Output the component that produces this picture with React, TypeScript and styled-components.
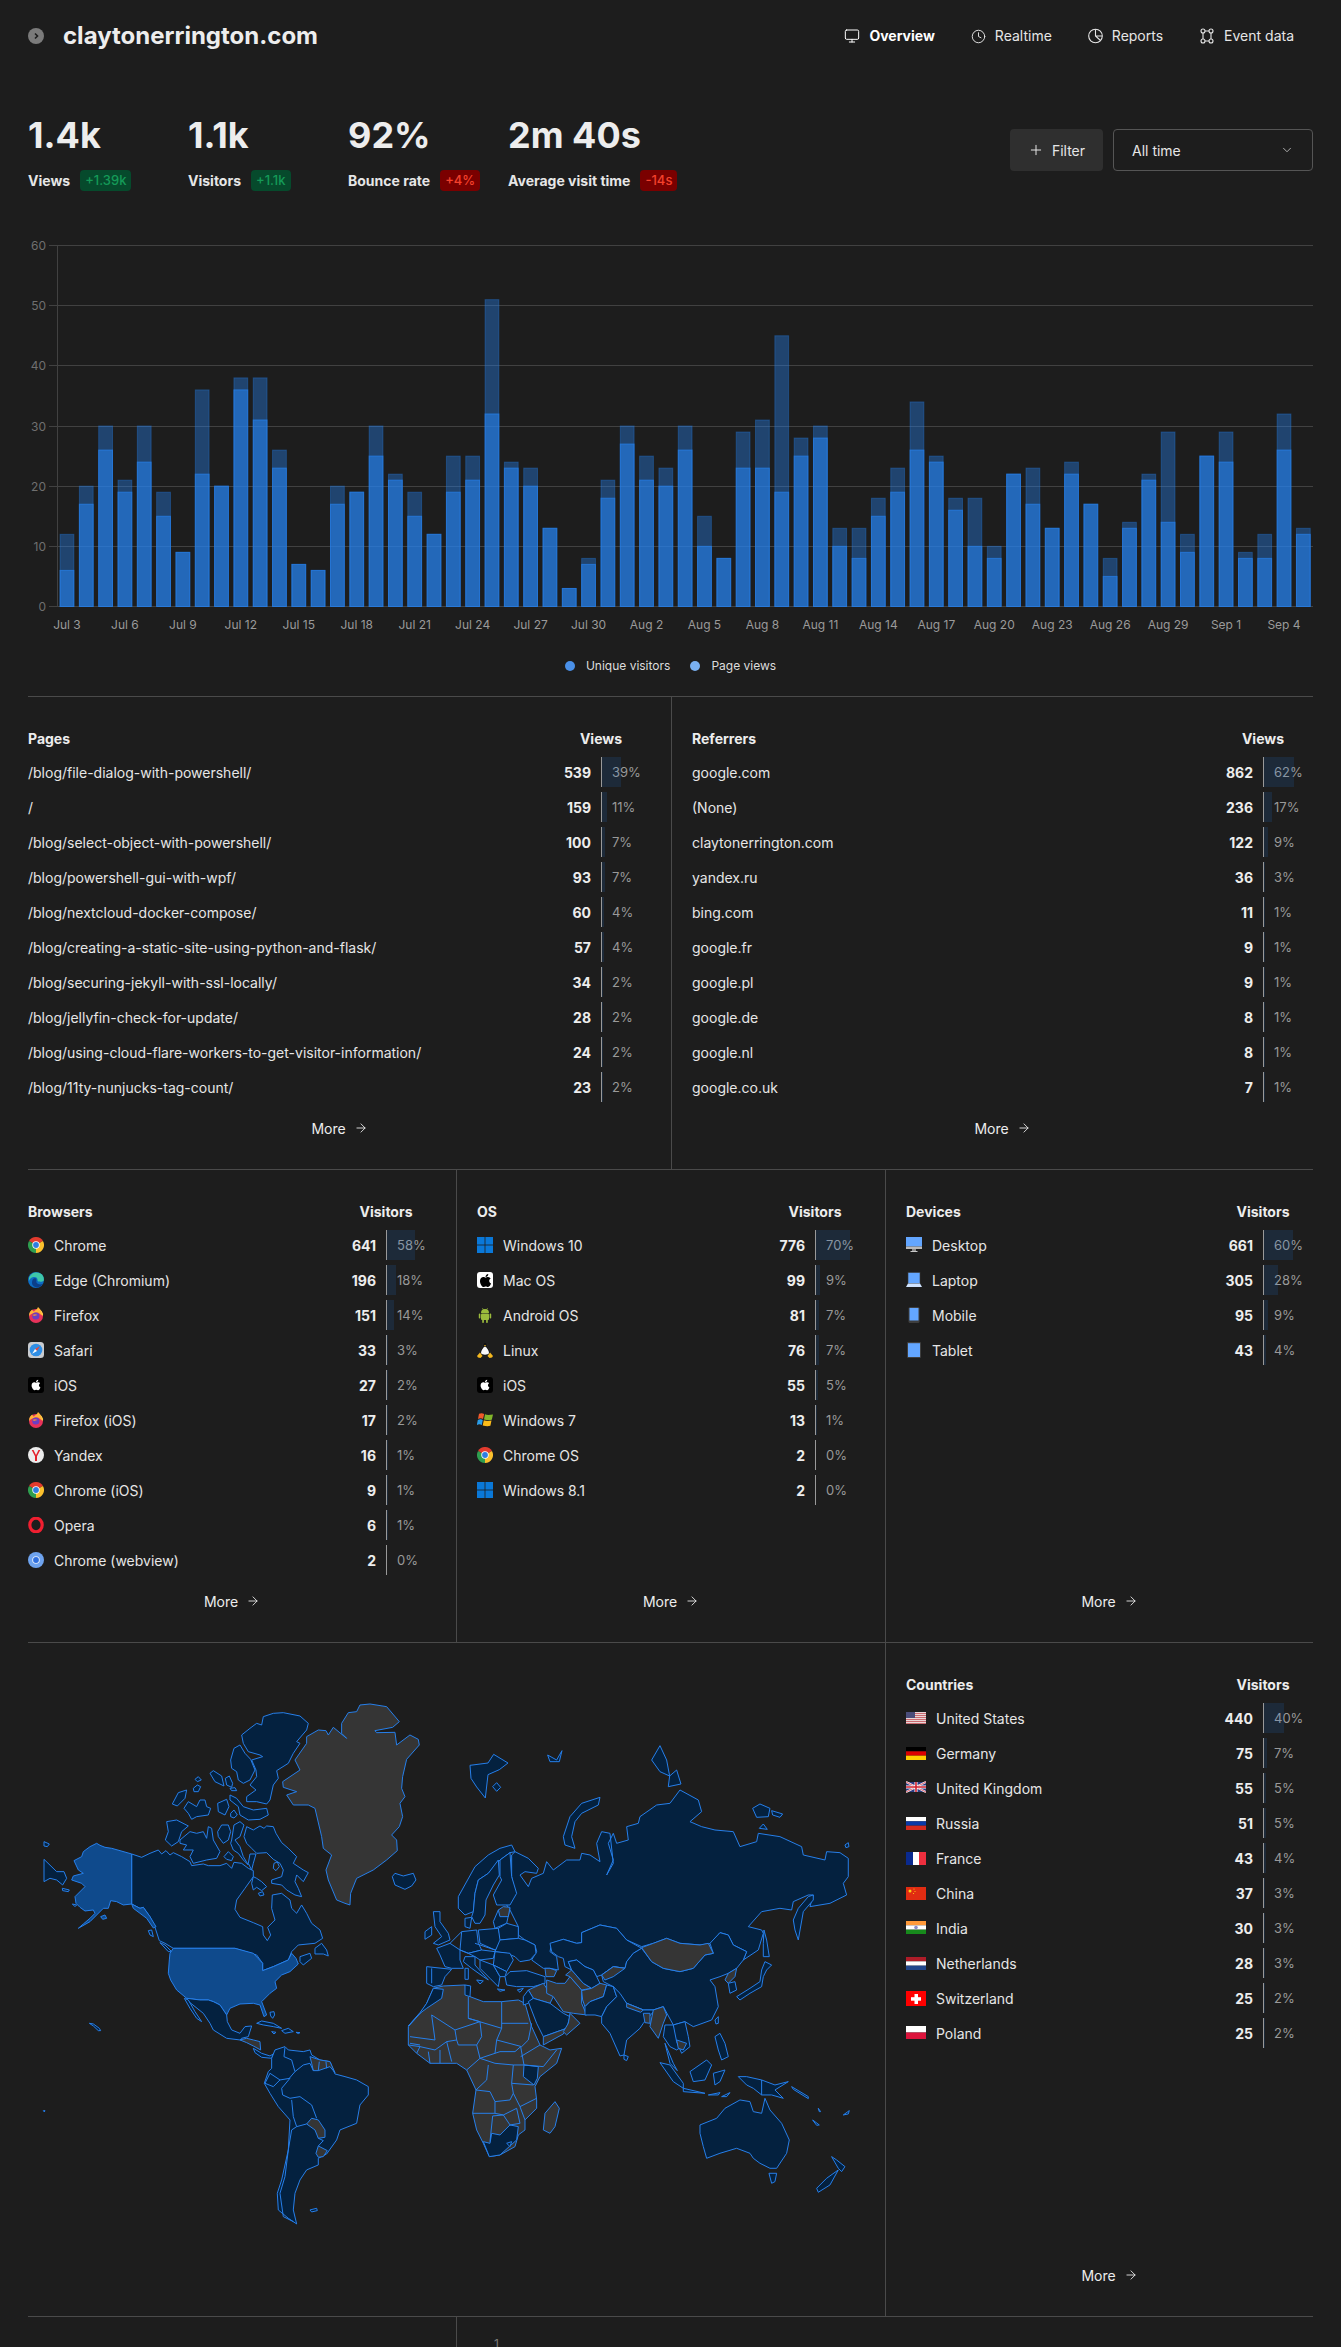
import React from 'react';
import styled, { createGlobalStyle } from 'styled-components';
import { Monitor, Clock, Plus, ChevronDown, ArrowRight } from 'lucide-react';
import { FaApple } from 'react-icons/fa';

const Global = createGlobalStyle`
  html, body { margin: 0; padding: 0; background: #1d1d1d; }
  body { font-family: Inter, "Noto Sans", "Liberation Sans", sans-serif; color: #e6e6e6; }
  * { box-sizing: border-box; }
`;

const Page = styled.div`
  width: 1341px;
  height: 2347px;
  overflow: hidden;
  padding: 0 28px;
  background: #1d1d1d;
`;

const Header = styled.header`
  height: 72px;
  display: flex;
  align-items: center;
  justify-content: space-between;
  padding-right: 19px;
`;
const Brand = styled.div`
  display: flex;
  align-items: center;
  gap: 19px;
`;
const BrandDot = styled.span`
  width: 16px;
  height: 16px;
  border-radius: 50%;
  background: #7b7b7b;
  display: flex;
  align-items: center;
  justify-content: center;
`;
const Title = styled.h1`
  margin: 0;
  font-size: 24px;
  line-height: 30px;
  font-weight: 700;
  color: #ededed;
`;
const Nav = styled.nav`
  display: flex;
  align-items: center;
  gap: 36px;
`;
const NavItem = styled.a<{ $active?: boolean }>`
  display: flex;
  align-items: center;
  gap: 9px;
  font-size: 14px;
  line-height: 20px;
  font-weight: ${p => (p.$active ? 700 : 400)};
  color: ${p => (p.$active ? '#ffffff' : '#e6e6e6')};
`;

const Summary = styled.section`
  height: 165px;
  padding-top: 40px;
  display: flex;
  justify-content: space-between;
  align-items: flex-start;
`;
const Metrics = styled.div`
  display: flex;
  gap: 20px;
`;
const Metric = styled.div`
  min-width: 140px;
`;
const MetricValue = styled.div`
  font-size: 36px;
  line-height: 46px;
  font-weight: 700;
  color: #ededed;
  margin-bottom: 12px;
`;
const MetricLabelRow = styled.div`
  display: flex;
  align-items: center;
  gap: 10px;
  height: 21px;
`;
const MetricLabel = styled.span`
  font-size: 14px;
  font-weight: 700;
  color: #e6e6e6;
  white-space: nowrap;
`;
const Badge = styled.span<{ $bad?: boolean }>`
  height: 21px;
  line-height: 21px;
  padding: 0 5px;
  border-radius: 4px;
  font-size: 13px;
  font-weight: 500;
  white-space: nowrap;
  background: ${p => (p.$bad ? '#7a0000' : '#064a2c')};
  color: ${p => (p.$bad ? '#f4412c' : '#159a58')};
`;
const Controls = styled.div`
  display: flex;
  gap: 10px;
  margin-top: 17px;
`;
const FilterButton = styled.button`
  width: 93px;
  height: 42px;
  border: 0;
  border-radius: 4px;
  background: #2f2f2f;
  color: #e6e6e6;
  font: 400 14px Inter, sans-serif;
  display: flex;
  align-items: center;
  justify-content: center;
  gap: 8px;
`;
const Select = styled.div`
  width: 200px;
  height: 42px;
  border: 1px solid #555;
  border-radius: 4px;
  display: flex;
  align-items: center;
  justify-content: space-between;
  padding: 0 18px;
  font-size: 14px;
  color: #e6e6e6;
`;

const ChartSvg = styled.svg`
  display: block;
  width: 1285px;
  height: 403px;
`;
const AxisText = styled.text`
  font-family: Inter, sans-serif;
  font-size: 12px;
  fill: #6f6f6f;
`;
const TickText = styled(AxisText)`
  fill: #9a9a9a;
`;
const Legend = styled.div`
  height: 57px;
  padding-bottom: 5px;
  display: flex;
  align-items: center;
  justify-content: center;
  gap: 20px;
  border-bottom: 1px solid #4a4a4a;
`;
const LegendItem = styled.div`
  display: flex;
  align-items: center;
  gap: 11px;
  font-size: 12px;
  color: #dcdcdc;
`;
const LegendDot = styled.span<{ $color: string }>`
  width: 10px;
  height: 10px;
  border-radius: 50%;
  background: ${p => p.$color};
`;

const Row = styled.div<{ $cols: string; $h: number }>`
  display: grid;
  grid-template-columns: ${p => p.$cols};
  height: ${p => p.$h}px;
  border-bottom: 1px solid #4a4a4a;
`;
const Panel = styled.div<{ $first?: boolean; $last?: boolean }>`
  display: flex;
  flex-direction: column;
  padding: 30px ${p => (p.$last ? 0 : 20)}px 30px ${p => (p.$first ? 0 : 20)}px;
  border-left: ${p => (p.$first ? '0' : '1px solid #4a4a4a')};
`;
const PanelHead = styled.div`
  height: 22px;
  margin-bottom: 8px;
  display: flex;
  align-items: center;
  justify-content: space-between;
  font-size: 14px;
  font-weight: 700;
  color: #ededed;
`;
const HeadMetric = styled.span`
  width: 100px;
  text-align: center;
`;
const TableRow = styled.div`
  height: 30px;
  margin-bottom: 5px;
  display: flex;
  align-items: center;
  font-size: 14px;
`;
const RowLabel = styled.div`
  flex: 1;
  display: flex;
  align-items: center;
  gap: 10px;
  color: #e6e6e6;
  white-space: nowrap;
`;
const RowValue = styled.div`
  font-weight: 700;
  color: #ededed;
  margin-right: 10px;
`;
const RowPct = styled.div`
  position: relative;
  width: 50px;
  height: 30px;
  line-height: 30px;
  padding-left: 10px;
  border-left: 1px solid #999;
  font-size: 13px;
  color: #999;
`;
const PctBar = styled.span`
  position: absolute;
  left: 0;
  top: 0;
  height: 30px;
  background: rgba(38, 128, 235, 0.14);
`;
const MoreLink = styled.a`
  margin-top: auto;
  height: 22px;
  display: flex;
  align-items: center;
  justify-content: center;
  gap: 8px;
  font-size: 14px;
  color: #ededed;
`;
const MapCell = styled.div`
  overflow: hidden;
`;
const MapSvg = styled.svg`
  display: block;
  width: 857px;
  height: 673px;
`;
const FooterRow = styled.div`
  display: grid;
  grid-template-columns: 428px 1fr;
  height: 300px;
`;
const FooterCell = styled.div<{ $line?: boolean }>`
  border-left: ${p => (p.$line ? '1px solid #4a4a4a' : '0')};
  padding: 19px 0 0 37px;
  font-size: 12px;
  color: #7a7a7a;
`;
const IconBox = styled.svg`
  flex: none;
  display: block;
`;
const AppleTile = styled.span<{ $light?: boolean }>`
  flex: none;
  width: 16px;
  height: 16px;
  border-radius: 3px;
  display: flex;
  align-items: center;
  justify-content: center;
  background: ${p => (p.$light ? '#fff' : '#000')};
  color: ${p => (p.$light ? '#000' : '#fff')};
`;

/* ---------- icons ---------- */
const Sv: React.FC<{ w?: number; h?: number; vb?: string; children: React.ReactNode }> = ({ w = 16, h = 16, vb = '0 0 16 16', children }) => (
  <IconBox width={w} height={h} viewBox={vb}>{children}</IconBox>
);
const Chrome = () => (
  <Sv>
    <path d="M8 8L1.07 4A8 8 0 0 1 14.93 4Z" fill="#e33b2e" />
    <path d="M8 8L14.93 4A8 8 0 0 1 8 16Z" fill="#fbc02d" />
    <path d="M8 8L8 16A8 8 0 0 1 1.07 4Z" fill="#2e9e4f" />
    <circle cx="8" cy="8" r="3.7" fill="#fff" />
    <circle cx="8" cy="8" r="2.9" fill="#2f7de1" />
  </Sv>
);
const Edge = () => (
  <Sv>
    <circle cx="8" cy="8" r="8" fill="#0d6cc4" />
    <path d="M1 6C2.5 1 8-1 12.5 1.5 15.5 3 16.5 7 15.5 9 14 10 10 10 9.5 8.5 10 6 8 4.5 5.5 5 3 5.5 1.5 7 1 9Z" fill="#3ec6a8" />
    <path d="M4.5 8C5 6.5 7 5.8 8 6.8 9 8 8 9 8.5 10.5 9.5 12.5 12.5 13 14.5 12 12.5 15.5 8 16.5 5.5 14 3.5 12.5 3.8 9.5 4.5 8Z" fill="#0b3f8a" />
  </Sv>
);
const Firefox = () => (
  <Sv>
    <circle cx="8" cy="9" r="7" fill="#e8325a" />
    <path d="M1 9C1 5 3 3 4.5 2.5 4.5 4 5.5 4.5 6 4.5 7 3 9.5 2.5 10 0 12 2 14 4 15 7 15.5 10 13.5 8 12 7 9 4 4 6 1 9Z" fill="#ffb43a" />
    <path d="M12.5 3C14 4.5 15 6.5 15 9 14 8 13.5 6 12.5 3Z" fill="#ffd44d" />
    <circle cx="7.8" cy="9" r="3.6" fill="#6b3fc4" />
    <path d="M4.5 8C6 7 8 7 9.5 8 8.5 8.5 7 8.5 6 9 5.5 8.8 5 8.5 4.5 8Z" fill="#f58a3a" />
  </Sv>
);
const Safari = () => (
  <Sv>
    <rect x="0" y="0" width="16" height="16" rx="3.5" fill="#c9ccd0" />
    <circle cx="8" cy="8" r="6.3" fill="#2f8fe6" />
    <path d="M11.8 4.2L9 9 7 7Z" fill="#e8443a" />
    <path d="M4.2 11.8L7 7 9 9Z" fill="#fff" />
  </Sv>
);
const Yandex = () => (
  <Sv>
    <circle cx="8" cy="8" r="8" fill="#ececec" />
    <path d="M7 14V9.3L3.7 3H5.5L8 8 10.5 3H12.3L9 9.3V14Z" fill="#e3202a" />
  </Sv>
);
const Opera = () => (
  <Sv>
    <ellipse cx="8" cy="8" rx="6.2" ry="6.8" fill="none" stroke="#f01f30" strokeWidth="3.2" />
  </Sv>
);
const Webview = () => (
  <Sv>
    <circle cx="8" cy="8" r="8" fill="#6ea3ee" />
    <circle cx="8" cy="8" r="3.8" fill="#e8f0fc" />
    <circle cx="8" cy="8" r="2.9" fill="#2f6fde" />
  </Sv>
);
const Win10 = () => (
  <Sv>
    <rect width="7.6" height="7.6" fill="#0a78d8" />
    <rect x="8.4" width="7.6" height="7.6" fill="#0a78d8" />
    <rect y="8.4" width="7.6" height="7.6" fill="#0a78d8" />
    <rect x="8.4" y="8.4" width="7.6" height="7.6" fill="#0a78d8" />
  </Sv>
);
const Win7 = () => (
  <Sv>
    <path d="M2 1.8C4 .8 5.5 1 7.2 2L6 7C4.500 6 3 6 1 7Z" fill="#f05a2a" />
    <path d="M8 2.300C10 3.200 12 3.200 16 2.500L14.800 7.800C12 8.500 10 8.200 7 7.400Z" fill="#82b62a" />
    <path d="M.8 8C2.500 7 4.500 7 5.800 8L4.800 13C3 12 1.500 12-.2 13Z" fill="#2a9de8" />
    <path d="M6.800 8.300C9 9 11.500 9.300 14.500 8.600L13.400 13.800C11 14.500 8.500 14.200 5.700 13.400Z" fill="#fbbc1a" />
  </Sv>
);
const Android = () => (
  <Sv>
    <g fill="#9bbb3c">
      <path d="M4 6A4 4 0 0 1 12 6Z" />
      <rect x="4" y="6.600" width="8" height="6.400" rx="1" />
      <rect x="1.800" y="6.600" width="1.600" height="5" rx=".8" />
      <rect x="12.600" y="6.600" width="1.600" height="5" rx=".8" />
      <rect x="5.200" y="12" width="1.700" height="4" rx=".8" />
      <rect x="9.100" y="12" width="1.700" height="4" rx=".8" />
      <path d="M5.300 1L6.600 3M10.700 1L9.400 3" stroke="#9bbb3c" strokeWidth=".6" />
    </g>
  </Sv>
);
const Linux = () => (
  <Sv>
    <path d="M8 0C6.300 0 5.800 2 6 3.500 5 6 2.800 8 2.800 11 3 13 5 14 8 14 11 14 13 13 13.200 11 13.200 8 11 6 10 3.500 10.200 2 9.700 0 8 0Z" fill="#111" stroke="#444" strokeWidth=".3" />
    <path d="M8 4.500C6.200 5.500 4 8.500 4 11 4.500 13.200 11.500 13.200 12 11 12 8.500 9.800 5.500 8 4.500Z" fill="#fafafa" />
    <path d="M0 14L3 10.500 5.500 14 3.500 16 1 15.500Z" fill="#f4b81f" />
    <path d="M16 14L13 10.500 10.500 14 12.500 16 15 15.500Z" fill="#f4b81f" />
    <path d="M6.800 3.200H9.200L8 4.600Z" fill="#f4b81f" />
  </Sv>
);
const Desktop = () => (
  <Sv>
    <rect y="0" width="16" height="9.500" fill="#63a6ff" />
    <rect y="9.500" width="16" height="2.500" fill="#b9b9b9" />
    <rect x="6" y="12" width="4" height="2" fill="#8c8c8c" />
    <rect x="4.500" y="14" width="7" height="1" fill="#c9c9c9" />
  </Sv>
);
const Laptop = () => (
  <Sv>
    <rect x="2" y="0.500" width="12" height="11" fill="#63a6ff" stroke="#3b3b3b" strokeWidth=".6" />
    <path d="M2 11.500H14L16 15H0Z" fill="#cfe3ff" />
  </Sv>
);
const Mobile = () => (
  <Sv>
    <rect x="2.500" y="0" width="11" height="16" rx="1.500" fill="#3e3e3e" />
    <rect x="3.500" y="1" width="9" height="12.500" fill="#63a6ff" />
  </Sv>
);
const Tablet = () => (
  <Sv>
    <rect x="1" y="0" width="14" height="16" rx="1" fill="#3e3e3e" />
    <rect x="2" y="1.200" width="12" height="13.800" fill="#63a6ff" />
  </Sv>
);
const Apple = ({ light }: { light?: boolean }) => <AppleTile $light={light}><FaApple size={light ? 15 : 12} /></AppleTile>;
const EventIcon = () => (
  <Sv w={16} h={16} vb="-1 0 16 16">
    <g fill="none" stroke="#e6e6e6" strokeWidth="1.100">
      <circle cx="3" cy="3" r="2" /><circle cx="11" cy="3" r="2" /><circle cx="3" cy="13" r="2" /><circle cx="11" cy="13" r="2" />
      <path d="M5 3H9M3 5V11M11 5V11M5 13H9" />
    </g>
  </Sv>
);
const ReportIcon = () => (
  <Sv w={15} h={16} vb="0 0 15 16">
    <g fill="none" stroke="#e6e6e6" strokeWidth="1.100">
      <circle cx="7.500" cy="8" r="6.800" />
      <path d="M7.500 1.200V8L12.500 12.500M7.500 8H14" />
    </g>
  </Sv>
);

/* flags */
const Flag: React.FC<{ children: React.ReactNode }> = ({ children }) => <Sv w={20} h={15} vb="0 0 20 15">{children}</Sv>;
const H3 = ({ a, b, c, y = 0, h = 13 }: { a: string; b: string; c: string; y?: number; h?: number }) => (
  <Flag>
    <rect y={y} width="20" height={h / 3} fill={a} />
    <rect y={y + h / 3} width="20" height={h / 3} fill={b} />
    <rect y={y + (2 * h) / 3} width="20" height={h / 3} fill={c} />
  </Flag>
);
const FlagUS = () => (
  <Flag>
    <rect y="1" width="20" height="11" fill="#e9d7d8" />
    {[1, 3, 5, 7, 9, 11].map(y => <rect key={y} y={y + 1} width="20" height="1" fill="#c96a70" />)}
    <rect y="1" width="9" height="6" fill="#4a4d7a" />
  </Flag>
);
const FlagUK = () => (
  <Flag>
    <rect y="1" width="20" height="10" fill="#2a3a80" />
    <path d="M0 1L20 11M20 1L0 11" stroke="#fff" strokeWidth="2" />
    <path d="M0 1L20 11M20 1L0 11" stroke="#d0202e" strokeWidth=".7" />
    <path d="M10 1V11M0 6H20" stroke="#fff" strokeWidth="3" />
    <path d="M10 1V11M0 6H20" stroke="#d0202e" strokeWidth="1.600" />
  </Flag>
);
const FlagFR = () => (
  <Flag>
    <rect y="1" width="7" height="13" fill="#0a2a8f" />
    <rect x="7" y="1" width="6" height="13" fill="#fff" />
    <rect x="13" y="1" width="7" height="13" fill="#ee2f3e" />
  </Flag>
);
const FlagCN = () => (
  <Flag>
    <rect y="1" width="20" height="13" fill="#e12c12" />
    <circle cx="4" cy="5" r="1.500" fill="#fcd116" />
    <circle cx="8" cy="3" r=".6" fill="#fcd116" />
    <circle cx="9" cy="5.500" r=".6" fill="#fcd116" />
    <circle cx="7.500" cy="7.500" r=".6" fill="#fcd116" />
  </Flag>
);
const FlagIN = () => (
  <Flag>
    <rect y="0" width="20" height="4.300" fill="#ff9a3a" />
    <rect y="4.300" width="20" height="4.400" fill="#fff" />
    <rect y="8.700" width="20" height="4.300" fill="#178a1c" />
    <circle cx="10" cy="6.500" r="1.800" fill="#8a8ac8" />
  </Flag>
);
const FlagCH = () => (
  <Flag>
    <rect y="0" width="20" height="15" fill="#f00" />
    <rect x="8.500" y="3" width="3.500" height="10" fill="#fff" />
    <rect x="5" y="6.200" width="10" height="3.500" fill="#fff" />
  </Flag>
);
const FlagPL = () => (
  <Flag>
    <rect y="0" width="20" height="6.500" fill="#fff" />
    <rect y="6.500" width="20" height="6.500" fill="#dc143c" />
  </Flag>
);

/* ---------- data ---------- */
type R = [string, string, number, React.ReactNode?];
const pages: R[] = [
  ['/blog/file-dialog-with-powershell/', '539', 39], ['/', '159', 11],
  ['/blog/select-object-with-powershell/', '100', 7], ['/blog/powershell-gui-with-wpf/', '93', 7],
  ['/blog/nextcloud-docker-compose/', '60', 4], ['/blog/creating-a-static-site-using-python-and-flask/', '57', 4],
  ['/blog/securing-jekyll-with-ssl-locally/', '34', 2], ['/blog/jellyfin-check-for-update/', '28', 2],
  ['/blog/using-cloud-flare-workers-to-get-visitor-information/', '24', 2], ['/blog/11ty-nunjucks-tag-count/', '23', 2],
];
const refs: R[] = [
  ['google.com', '862', 62], ['(None)', '236', 17], ['claytonerrington.com', '122', 9], ['yandex.ru', '36', 3],
  ['bing.com', '11', 1], ['google.fr', '9', 1], ['google.pl', '9', 1], ['google.de', '8', 1], ['google.nl', '8', 1], ['google.co.uk', '7', 1],
];
const browsers: R[] = [
  ['Chrome', '641', 58, <Chrome />], ['Edge (Chromium)', '196', 18, <Edge />], ['Firefox', '151', 14, <Firefox />],
  ['Safari', '33', 3, <Safari />], ['iOS', '27', 2, <Apple />], ['Firefox (iOS)', '17', 2, <Firefox />],
  ['Yandex', '16', 1, <Yandex />], ['Chrome (iOS)', '9', 1, <Chrome />], ['Opera', '6', 1, <Opera />], ['Chrome (webview)', '2', 0, <Webview />],
];
const oses: R[] = [
  ['Windows 10', '776', 70, <Win10 />], ['Mac OS', '99', 9, <Apple light />], ['Android OS', '81', 7, <Android />],
  ['Linux', '76', 7, <Linux />], ['iOS', '55', 5, <Apple />], ['Windows 7', '13', 1, <Win7 />],
  ['Chrome OS', '2', 0, <Chrome />], ['Windows 8.1', '2', 0, <Win10 />],
];
const devices: R[] = [
  ['Desktop', '661', 60, <Desktop />], ['Laptop', '305', 28, <Laptop />], ['Mobile', '95', 9, <Mobile />], ['Tablet', '43', 4, <Tablet />],
];
const countries: R[] = [
  ['United States', '440', 40, <FlagUS />], ['Germany', '75', 7, <H3 a="#000" b="#dd0000" c="#ffce00" y={1} />],
  ['United Kingdom', '55', 5, <FlagUK />], ['Russia', '51', 5, <H3 a="#fff" b="#0a3aa8" c="#d52b1e" y={1} />],
  ['France', '43', 4, <FlagFR />], ['China', '37', 3, <FlagCN />], ['India', '30', 3, <FlagIN />],
  ['Netherlands', '28', 3, <H3 a="#ae1c28" b="#fff" c="#21468b" y={1} />], ['Switzerland', '25', 2, <FlagCH />], ['Poland', '25', 2, <FlagPL />],
];

const views = [12,20,30,21,30,19,9,36,20,38,38,26,7,6,20,19,30,22,19,12,25,25,51,24,23,13,3,8,21,30,25,23,30,15,8,29,31,45,28,30,13,13,18,23,34,25,18,18,10,22,23,13,24,17,8,14,22,29,12,25,29,9,12,32,13];
const uniq = [6,17,26,19,24,15,9,22,20,36,31,23,7,6,17,19,25,21,15,12,19,21,32,23,20,13,3,7,18,27,21,20,26,10,8,23,23,19,25,28,10,8,15,19,26,24,16,10,8,22,17,13,22,17,5,13,21,14,9,25,24,8,8,26,12];

const Y0 = 369.5;
const UNIT = 361 / 60;
const BW = 13.8;
const STEP = 1255.7 / 65;
const cx = (i: number) => 29.3 + STEP * (i + 0.5);
const MONTH = ['Jul', 'Aug', 'Sep'];
const dateLabel = (i: number) => {
  if (i <= 28) return `${MONTH[0]} ${i + 3}`;
  if (i <= 59) return `${MONTH[1]} ${i - 28}`;
  return `${MONTH[2]} ${i - 59}`;
};

const Chart = () => (
  <ChartSvg viewBox="0 0 1285 403">
    {[0, 10, 20, 30, 40, 50, 60].map(v => {
      const y = Math.round(Y0 - v * UNIT - 0.5) + 0.5;
      return (
        <g key={v}>
          <line x1="21" x2="1285" y1={y} y2={y} stroke="#414141" />
          <AxisText x="18" y={y + 4} textAnchor="end">{v}</AxisText>
        </g>
      );
    })}
    <line x1="29.500" x2="29.500" y1="8" y2="370" stroke="#414141" />
    {views.map((v, i) => (
      <rect key={`v${i}`} x={cx(i) - BW / 2} y={Y0 - v * UNIT} width={BW} height={v * UNIT}
        fill="rgba(38,128,235,0.4)" stroke="rgba(38,128,235,0.35)" />
    ))}
    {uniq.map((v, i) => (
      <rect key={`u${i}`} x={cx(i) - BW / 2} y={Y0 - v * UNIT} width={BW} height={v * UNIT}
        fill="rgba(38,128,235,0.6)" stroke="rgba(38,128,235,0.7)" />
    ))}
    {views.map((_, i) => i % 3 === 0 && (
      <TickText key={i} x={cx(i)} y="392" textAnchor="middle">{dateLabel(i)}</TickText>
    ))}
  </ChartSvg>
);

/* ---------- map, traced from the picture ---------- */
const D = '#04213f', B = '#0f4a8c', G = '#353535';
type S = [string, string];
const west: S[] = [
  [G, '960,15 990,12 1040,20 1078,65 1058,82 1005,92 1010,98 1065,97 1070,135 1110,105 1135,118 1138,135 1100,178 1088,230 1085,265 1095,290 1080,310 1088,350 1078,380 1055,405 1070,420 1072,452 1040,480 1000,510 950,535 932,580 930,615 915,610 890,600 865,540 858,510 875,465 850,445 845,410 825,325 805,315 760,315 740,285 770,275 730,262 728,245 780,210 765,180 800,130 800,110 835,90 858,92 865,105 880,82 920,115 905,100 905,70 925,38 950,35'],
  [D, '1057,530 1065,520 1090,528 1120,520 1128,540 1115,558 1095,568 1065,555'],
  [D, '605,105 630,85 650,70 665,75 670,50 700,40 730,38 780,48 805,70 800,90 770,125 780,130 760,160 745,190 710,212 715,235 700,255 690,300 680,312 650,305 620,305 620,290 648,270 630,255 650,230 648,210 635,180 668,170 660,165 625,155 610,130'],
  [D, '572,180 582,145 600,135 615,160 632,178 645,210 630,240 610,250 595,240 590,215 575,205'],
  [D, '570,285 590,295 610,320 640,330 680,325 685,345 660,358 625,360 600,345 595,320 570,300'],
  [D, '533,310 560,298 567,320 555,345 535,335'],
  [D, '572,340 582,330 592,345 582,354 572,350'],
  [D, '432,325 445,305 470,320 480,300 495,300 500,320 512,325 505,345 470,350 455,358 445,340'],
  [D, '397,312 415,278 440,270 435,295 412,318'],
  [D, '460,265 472,255 482,260 475,275 462,275'],
  [D, '465,238 475,230 484,240 472,245'],
  [D, '510,220 520,212 545,228 552,258 525,245'],
  [D, '556,235 568,228 578,250 575,262 560,255'],
  [D, '570,265 585,263 590,272 575,272'],
  [D, '380,365 410,360 445,378 425,395 415,425 395,438 376,420 385,395'],
  [D, '420,420 450,395 470,400 490,395 500,415 505,380 515,385 520,420 540,455 530,475 500,480 460,490 450,470 460,450 430,450 440,435 420,430'],
  [D, '533,395 545,375 565,375 572,395 565,420 550,430 535,410'],
  [D, '575,420 582,375 600,365 612,375 600,410 585,420 600,440 610,470 625,495 610,480 595,460 580,450 572,430'],
  [D, '552,470 565,455 580,470 575,482 560,478'],
  [D, '630,462 648,462 640,490 635,510 625,490'],
  [D, '620,380 640,390 660,378 672,385 680,378 700,380 708,400 725,428 745,445 770,470 760,490 790,510 805,518 790,545 770,525 765,545 775,565 785,590 765,585 740,570 725,555 695,550 695,540 725,530 730,510 720,490 700,478 680,458 650,460 635,445 620,430 612,410'],
  ['#1d1d1d', '702,490 712,486 718,500 708,512 700,505'],
  [D, '275,462 305,472 330,460 355,450 365,462 378,452 390,465 400,458 425,470 450,485 455,497 490,492 505,497 540,497 560,490 575,505 582,487 605,490 625,505 640,512 640,530 615,565 590,600 585,628 600,652 640,668 668,680 670,705 682,722 692,705 683,682 705,660 695,625 697,585 725,580 750,600 755,625 770,640 785,615 800,640 815,670 840,690 848,715 825,730 775,735 755,755 745,780 700,800 668,812 668,790 650,765 585,745 400,745 375,730 358,722 345,682 330,650 310,622 300,625 275,612'],
  [D, '640,530 650,535 665,545 680,560 665,572 650,562 640,570 635,550'],
  [D, '655,580 668,575 672,585 660,588'],
  [D, '825,745 845,730 860,750 865,768 850,762 825,762'],
  [D, '780,770 810,760 815,775 790,795 780,785'],
  [D, '360,728 375,735 395,755 385,755'],
  [D, '325,692 335,690 340,710 330,705'],
  [B, '170,430 180,436 195,442 215,445 240,452 275,462 275,612 250,615 230,605 212,602 205,625 190,625 170,645 150,665 115,685 130,672 150,655 165,640 160,630 135,633 120,622 108,610 105,590 125,570 135,560 125,550 95,540 100,528 130,520 115,510 102,482 125,470 130,455 150,440'],
  [B, '275,612 300,625 310,622 330,650 348,680 340,684 320,655 300,640 280,625'],
  [B, '182,650 195,645 200,655 188,658'],
  [B, '400,745 585,745 640,760 668,790 668,812 700,800 745,780 755,760 768,775 775,792 750,815 725,825 705,845 710,865 690,880 665,905 680,945 672,950 660,915 640,910 600,912 570,925 560,945 540,915 520,905 505,900 480,900 440,895 410,870 392,840 385,820 388,780 390,760'],
  [D, '440,895 480,900 505,900 520,905 540,915 560,945 562,965 575,990 600,1000 615,980 635,978 625,1010 605,1015 600,1020 560,1015 520,990 510,970 490,940 465,920 440,900'],
  [D, '433,895 445,900 465,935 485,965 470,955 450,925'],
  [G, '600,1020 620,1015 640,1020 660,1025 662,1050 640,1038 620,1028'],
  [D, '640,1045 665,1060 690,1068 700,1062 695,1075 665,1072 645,1058'],
  [D, '650,970 665,963 700,970 725,985 700,980 670,975'],
  [D, '725,992 745,985 760,995 735,1000'],
  [D, '695,995 708,997 702,1002'],
  [D, '768,997 780,998 775,1001'],
  [D, '690,937 702,935 704,945 698,955 692,948'],
  [D, '148,970 160,972 178,985 182,992 175,992 160,978'],
  [D, '12,478 50,515 72,515 80,535 68,555 50,540 30,535 12,545'],
  [D, '12,425 28,432 22,440 12,438'],
  [D, '67,565 88,570 85,575 68,572'],
  [D, '97,612 110,615 105,620'],
  [D, '10,1232 15,1232 13,1236'],
  [D, '705,1050 735,1040 745,1050 790,1055 810,1050 815,1065 840,1080 870,1085 885,1122 915,1130 950,1140 985,1160 985,1185 960,1215 950,1270 900,1290 890,1320 860,1362 835,1375 835,1395 800,1410 780,1440 765,1480 760,1530 770,1572 745,1555 715,1530 712,1480 725,1440 745,1350 750,1260 715,1220 690,1180 673,1150 685,1115 695,1105 695,1075'],
  [G, '810,1070 840,1080 870,1085 885,1118 870,1100 835,1112 820,1112 815,1090'],
  [G, '800,1272 815,1255 835,1260 855,1290 855,1312 835,1315 825,1290'],
  [G, '828,1360 835,1338 862,1352 850,1370 835,1372'],
  [D, '810,1530 830,1525 832,1532 815,1536'],
];
const westLines = [
  '735,1042 732,1070 755,1080 765,1115 748,1135', '765,1115 790,1095 810,1090 820,1112',
  '675,1150 690,1120 720,1140 750,1135', '675,1150 700,1160 720,1140', '750,1135 725,1165 728,1185 750,1195 780,1190 815,1215 830,1255',
  '755,1200 760,1250 770,1280 800,1272', '755,1290 745,1350 735,1430 720,1480 730,1550 760,1565', '770,1280 755,1290',
  '835,1315 850,1322 835,1338', '835,1112 838,1085', '860,1105 858,1085',
];
const east: S[] = [
  [G, '25,740 65,695 80,670 100,625 130,618 195,615 210,650 250,665 305,665 355,660 375,670 395,740 420,795 450,810 485,805 470,850 420,890 405,920 410,960 410,985 375,1020 375,1050 355,1065 345,1100 300,1125 268,1130 250,1090 230,1050 218,1000 228,930 200,870 170,850 90,850 50,820 25,795'],
  [D, '25,738 60,698 80,670 100,625 130,628 125,655 80,685 60,700'],
  [D, '250,1085 270,1090 275,1060 300,1065 330,1035 355,1040 350,1080 300,1125 268,1130'],
  [D, '372,855 415,860 412,895 402,915 370,890'],
  [D, '195,615 212,618 210,650 195,645'],
  [G, '465,965 478,985 465,1040 450,1060 430,1050 435,1000'],
  [D, '490,170 510,110 545,70 600,52 595,75 545,100 525,125 515,170 525,205 495,195'],
  [D, '755,-60 780,-103 800,-60 809,-12 780,-25'],
  [D, '809,-12 830,-30 843,12 805,20'],
  [D, '210,-44 264,-51 281,-77 324,-51 298,-31 264,-16 256,54 230,21 213,-5'],
  [D, '278,20 290,8 302,22 290,34'],
  [D, '443,-75 470,-60 486,-88 478,-55 450,-55'],
  [D, '330,390 355,440 355,465 375,480 405,495 410,515 395,540 430,565 450,565 475,570 470,530 450,515 455,490 490,478 530,490 545,488 545,458 600,435 650,445 680,480 725,500 760,490 800,475 840,490 900,495 935,490 960,458 985,465 1000,495 1040,515 1030,540 1075,510 1090,460 1085,450 1045,440 1085,395 1140,385 1175,390 1180,365 1225,345 1240,345 1230,380 1290,370 1340,345 1330,310 1345,290 1345,235 1320,218 1280,215 1275,240 1210,225 1205,200 1140,170 1075,160 1070,185 1020,200 1000,155 945,150 905,140 870,125 905,95 895,60 840,30 810,70 770,75 720,110 715,130 680,140 685,180 650,190 640,160 625,190 640,240 620,285 640,250 630,160 605,155 590,190 600,245 570,225 545,220 540,240 500,240 460,270 440,245 430,280 395,295 385,320 360,285 375,275 410,280 415,265 385,235 345,215 335,225 335,290 345,340 320,375'],
  [D, '450,490 490,478 530,490 545,488 545,458 600,435 650,445 680,480 725,505 700,520 680,545 675,565 640,560 605,585 590,590 580,570 555,560 530,540 505,545 515,570 495,560 490,535 475,530 455,515'],
  [D, '725,505 755,545 790,565 840,575 880,565 915,525 940,520 930,490 960,458 985,465 1000,495 1040,515 1030,540 1010,565 985,580 960,590 930,600 945,620 955,680 935,720 880,740 855,725 820,735 790,680 760,690 730,690 680,670 640,620 610,605 605,585 640,560 675,565 680,545 700,520'],
  [G, '725,503 760,490 800,475 840,490 900,495 925,490 940,520 915,525 880,565 840,575 790,565 755,545'],
  [G, '985,580 1010,565 1005,590 985,610 975,600'],
  [D, '985,610 1005,605 1010,630 990,640'],
  [D, '945,720 955,710 955,730 948,732'],
  [D, '1010,650 1050,625 1080,605 1085,570 1095,545 1115,555 1100,570 1090,590 1085,620 1050,640 1020,660'],
  [D, '1240,345 1240,360 1210,395 1195,480 1185,450 1180,420 1195,385 1225,350'],
  [D, '1092,450 1100,480 1108,530 1090,530 1090,490'],
  [D, '1335,195 1345,188 1347,200 1338,203'],
  [D, '1058,85 1080,72 1110,85 1105,110 1070,112'],
  [D, '1115,92 1148,102 1140,112 1118,105'],
  [D, '1078,145 1090,132 1102,148'],
  [D, '175,350 225,260 265,225 300,205 335,195 345,215 330,218 300,240 265,280 235,300 225,340 220,395 195,405 175,385'],
  [D, '220,395 225,340 235,300 265,280 295,240 298,285 280,315 258,360 255,405 240,430 225,430 215,410'],
  [D, '300,240 330,218 335,290 350,340 330,375 290,375 280,345 305,300 300,290'],
  [D, '195,415 215,412 210,445 195,440'],
  [D, '100,395 120,395 120,425 145,460 150,480 115,495 100,490 125,470 105,440'],
  [D, '75,455 95,440 95,465 75,478'],
  [D, '110,505 150,490 180,510 180,540 190,565 155,565 135,560 120,525'],
  [D, '80,560 155,568 135,590 125,615 100,620 80,610'],
  [D, '185,455 230,450 235,490 245,510 205,520 180,510'],
  [D, '235,450 295,445 305,490 285,510 240,490'],
  [D, '295,390 330,385 320,430 285,445 280,425'],
  [G, '295,390 310,380 330,382 325,410 300,410'],
  [D, '295,445 320,430 355,440 355,475 300,480'],
  [D, '300,480 355,475 375,480 405,495 408,520 390,540 360,545 345,530 320,520 285,515'],
  [D, '285,515 330,520 340,540 320,575 280,555'],
  [D, '205,520 245,510 285,515 280,535 240,540 225,530'],
  [D, '195,530 225,530 225,555 265,600 250,590 215,565 190,545'],
  [D, '240,540 280,555 300,590 295,620 270,595 240,565'],
  [D, '280,555 320,575 315,590 300,590'],
  [D, '195,565 205,565 205,598 195,598'],
  [D, '230,600 250,603 240,612'],
  [D, '292,627 315,630 300,634'],
  [D, '352,630 370,625 360,637'],
  [D, '315,590 330,575 380,572 435,590 435,610 400,620 350,620 320,615'],
  [G, '435,565 450,565 470,572 462,590 438,590'],
  [G, '385,630 430,610 450,640 460,650 450,670 400,655'],
  [D, '370,650 385,630 400,655 385,670 370,675'],
  [D, '385,665 400,655 450,670 490,700 510,710 500,745 430,770 410,730'],
  [G, '430,770 500,745 490,762 430,795'],
  [G, '510,700 540,730 500,765 490,755 505,730'],
  [G, '440,600 470,610 495,610 510,590 545,630 545,670 560,705 520,700 490,695 460,650 440,640'],
  [G, '497,585 515,570 550,610 575,625 545,630 510,590'],
  [D, '505,545 530,540 555,560 580,570 590,590 600,610 575,625 550,610 515,570'],
  [G, '545,632 575,625 600,610 620,615 610,650 570,665 555,680 548,660'],
  [G, '605,585 640,560 675,565 640,590 615,600'],
  [D, '555,680 570,665 610,650 620,615 640,620 650,650 620,680 605,710 585,705 555,705'],
  [D, '605,710 620,680 650,650 640,620 660,640 680,670 730,690 765,690 730,730 720,745 680,780 672,825 660,828 630,760 605,730'],
  [G, '680,670 730,690 722,697 680,682'],
  [G, '730,700 750,700 750,730 735,728'],
  [G, '760,690 790,680 800,705 790,730 775,775 750,740'],
  [D, '795,735 820,735 830,760 845,800 830,810 810,800 790,770'],
  [D, '820,735 855,725 865,770 870,800 845,820 830,785'],
  [G, '830,780 860,790 850,810 835,805'],
  [D, '795,790 820,850 832,872 810,850'],
  [D, '780,848 810,855 850,910 850,925 820,905'],
  [D, '850,925 915,940 850,935'],
  [D, '870,875 920,840 935,855 915,900 880,905'],
  [D, '940,880 975,870 960,905 945,915'],
  [D, '945,770 960,760 975,790 985,830 965,840 955,810'],
  [D, '925,945 960,938 955,945'], [D, '965,950 990,938 980,950'],
  [D, '1015,890 1040,890 1085,900 1125,915 1165,905 1125,930 1150,955 1115,945 1085,945 1060,925 1040,915'],
  [D, '1175,920 1225,950 1225,956 1180,928'],
  [D, '672,825 685,830 680,842 672,838'],
  [D, '900,1035 950,1015 975,985 1020,960 1050,965 1060,995 1085,1000 1095,955 1110,990 1145,1030 1168,1080 1160,1120 1130,1165 1110,1165 1080,1150 1060,1135 1050,1120 1010,1105 960,1120 920,1135 910,1100 900,1060'],
  [D, '1107,1180 1130,1180 1125,1205 1115,1210'],
  [D, '1295,1130 1310,1140 1335,1160 1325,1175 1315,1165'],
  [D, '1315,1170 1290,1215 1255,1237 1250,1225 1280,1195'],
  [D, '1255,985 1262,995 1258,995'], [D, '1238,1020 1258,1035 1250,1036'], [D, '1330,1005 1348,992 1345,1002'],
  [D, '320,1090 335,1085 330,1100'],
];
const eastLines = [
  '95,705 105,780 30,770', '95,705 165,750 240,725 205,715 205,650', '165,750 170,780 140,785 105,810 60,800 25,795',
  '205,715 305,745 305,665', '305,730 385,730', '240,725 245,770 230,795 240,835 285,820 290,780 305,745',
  '290,780 365,800 385,780 395,730', '170,780 175,795 230,795', '140,785 155,845', '120,810 120,850', '85,815 90,850',
  '60,800 50,820', '30,790 60,795', '200,870 240,835 285,850 340,855 372,855 362,800', '285,820 300,815 345,815 362,800',
  '362,830 420,795', '372,855 430,860 470,810', '228,930 260,900 265,855', '340,855 335,910 340,940', '335,910 400,915',
  '228,930 270,935 285,965 330,960 340,940 360,980 410,955', '218,1000 285,1000 285,965', '285,1000 310,1005 350,985 360,1030 330,1035 310,1005 278,1008 270,1085',
  '360,980 375,1020',
  '1085,900 1085,945', '95,565 95,610', '150,490 185,455', '225,490 285,510', '180,510 205,520',
];

const WorldMap = () => (
  <MapSvg viewBox="0 0 857 673">
    <g transform="translate(12 57) scale(.3333)" strokeWidth="3" stroke="#2680eb" strokeLinejoin="round">
      {west.map(([f, p], i) => <polygon key={i} points={p} fill={f} />)}
      {westLines.map((p, i) => <polyline key={i} points={p} fill="none" />)}
    </g>
    <g transform="translate(372 137) scale(.3333)" strokeWidth="3" stroke="#2680eb" strokeLinejoin="round">
      {east.map(([f, p], i) => <polygon key={i} points={p} fill={f} />)}
      {eastLines.map((p, i) => <polyline key={i} points={p} fill="none" />)}
    </g>
  </MapSvg>
);

const Table: React.FC<{ title: string; metric: string; rows: R[]; first?: boolean; last?: boolean }> = ({ title, metric, rows, first, last }) => (
  <Panel $first={first} $last={last}>
    <PanelHead><span>{title}</span><HeadMetric>{metric}</HeadMetric></PanelHead>
    {rows.map(([label, value, pct, icon]) => (
      <TableRow key={label + value}>
        <RowLabel>{icon}{label}</RowLabel>
        <RowValue>{value}</RowValue>
        <RowPct>
          <PctBar style={{ width: `${pct}%` }} />
          {pct}%
        </RowPct>
      </TableRow>
    ))}
    <MoreLink>More <ArrowRight size={14} strokeWidth={1.5} /></MoreLink>
  </Panel>
);

export default function App() {
  return (
    <Page>
      <Global />
      <Header>
        <Brand>
          <BrandDot>
            <Sv w={8} h={8} vb="0 0 8 8"><path d="M3 1.500L5.500 4 3 6.500" fill="none" stroke="#1d1d1d" strokeWidth="1.600" /></Sv>
          </BrandDot>
          <Title>claytonerrington.com</Title>
        </Brand>
        <Nav>
          <NavItem $active><Monitor size={16} strokeWidth={1.5} />Overview</NavItem>
          <NavItem><Clock size={15} strokeWidth={1.5} />Realtime</NavItem>
          <NavItem><ReportIcon />Reports</NavItem>
          <NavItem><EventIcon />Event data</NavItem>
        </Nav>
      </Header>
      <Summary>
        <Metrics>
          <Metric><MetricValue>1.4k</MetricValue><MetricLabelRow><MetricLabel>Views</MetricLabel><Badge>+1.39k</Badge></MetricLabelRow></Metric>
          <Metric><MetricValue>1.1k</MetricValue><MetricLabelRow><MetricLabel>Visitors</MetricLabel><Badge>+1.1k</Badge></MetricLabelRow></Metric>
          <Metric><MetricValue>92%</MetricValue><MetricLabelRow><MetricLabel>Bounce rate</MetricLabel><Badge $bad>+4%</Badge></MetricLabelRow></Metric>
          <Metric><MetricValue>2m 40s</MetricValue><MetricLabelRow><MetricLabel>Average visit time</MetricLabel><Badge $bad>-14s</Badge></MetricLabelRow></Metric>
        </Metrics>
        <Controls>
          <FilterButton><Plus size={16} strokeWidth={1.5} />Filter</FilterButton>
          <Select>All time<ChevronDown size={14} strokeWidth={1.2} /></Select>
        </Controls>
      </Summary>
      <Chart />
      <Legend>
        <LegendItem><LegendDot $color="#4a90e8" />Unique visitors</LegendItem>
        <LegendItem><LegendDot $color="#7ab0f0" />Page views</LegendItem>
      </Legend>
      <Row $cols="643px 642px" $h={473}>
        <Table title="Pages" metric="Views" rows={pages} first />
        <Table title="Referrers" metric="Views" rows={refs} last />
      </Row>
      <Row $cols="428px 429px 428px" $h={473}>
        <Table title="Browsers" metric="Visitors" rows={browsers} first />
        <Table title="OS" metric="Visitors" rows={oses} />
        <Table title="Devices" metric="Visitors" rows={devices} last />
      </Row>
      <Row $cols="857px 428px" $h={674}>
        <MapCell><WorldMap /></MapCell>
        <Table title="Countries" metric="Visitors" rows={countries} last />
      </Row>
      <FooterRow>
        <div />
        <FooterCell $line>1</FooterCell>
      </FooterRow>
    </Page>
  );
}
